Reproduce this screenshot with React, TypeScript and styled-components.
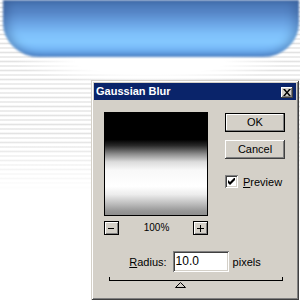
import React from "react";
import styled, { createGlobalStyle } from "styled-components";

const Global = createGlobalStyle`
  html, body { margin: 0; padding: 0; background: #fff; }
  body { font-family: "Liberation Sans", Arial, sans-serif; }
`;

const Page = styled.div`
  position: relative;
  width: 300px;
  height: 300px;
  overflow: hidden;
  display: flex;
  flex-direction: column;
  background-color: #fff;
  background-image:
    linear-gradient(to bottom, rgba(255,255,255,0) 0px, rgba(255,255,255,0) 135px, #fff 192px),
    radial-gradient(ellipse 135px 22px at 150px 62px, #fff 55%, rgba(255,255,255,0) 100%),
    repeating-linear-gradient(to bottom, #fff 0px, #fff 1.5px, #e3e3e3 3px, #fff 4.5px);
`;

const Banner = styled.div`
  margin-left: 3px;
  width: 296px;
  height: 57px;
  flex: none;
  border-radius: 0 0 36px 36px / 0 0 34px 34px;
  background: linear-gradient(
    to bottom,
    #4a78b8 0px,
    #5585c6 12px,
    #6ca6e6 24px,
    #7ec0fa 34px,
    #84c8ff 42px,
    #74b6f6 50px,
    #5b98e0 57px
  );
  box-shadow: inset 6px 0 8px rgba(40, 70, 120, 0.35), inset -6px 0 8px rgba(40, 70, 120, 0.3);
  filter: blur(0.8px);
`;

const Dialog = styled.div`
  margin-top: 23px;
  margin-left: 91px;
  width: 208px;
  height: 220px;
  flex: none;
  box-sizing: border-box;
  padding: 3px;
  background: #d4d0c8;
  box-shadow: inset 1px 1px #d4d0c8, inset -1px -1px #404040, inset 2px 2px #fff, inset -2px -2px #808080;
  display: flex;
  flex-direction: column;
  font-family: "Liberation Sans", Arial, sans-serif;
  font-size: 11px;
  color: #000;
`;

const TitleBar = styled.div`
  height: 17px;
  background: #0a246a;
  display: flex;
  align-items: center;
  justify-content: space-between;
  padding: 0 2px 0 2px;
`;

const Title = styled.span`
  color: #fff;
  font-weight: bold;
  font-size: 11px;
  line-height: 17px;
  white-space: nowrap;
`;

const CloseButton = styled.div`
  width: 12px;
  height: 11px;
  box-sizing: border-box;
  background: #d4d0c8;
  box-shadow: inset -1px -1px #404040, inset 1px 1px #fff, inset -2px -2px #808080;
  display: flex;
  align-items: center;
  justify-content: center;
  margin-top: 1px;
  margin-right: 1px;
`;

const Body = styled.div`
  display: flex;
  flex-direction: column;
  padding-top: 12px;
`;

const TopArea = styled.div`
  display: flex;
  gap: 17px;
  padding-left: 10px;
`;

const LeftCol = styled.div`
  width: 104px;
  display: flex;
  flex-direction: column;
`;

const PreviewBox = styled.div`
  width: 104px;
  height: 104px;
  box-sizing: border-box;
  border: 1px solid #000;
  background: linear-gradient(
    to bottom,
    #000 0%,
    #000 26%,
    #2a2a2a 32%,
    #8a8a8a 40%,
    #dcdcdc 48%,
    #f8f8f8 56%,
    #fff 72%,
    #ececec 80%,
    #bdbdbd 89%,
    #979797 96%,
    #8e8e8e 100%
  );
`;

const ZoomRow = styled.div`
  margin-top: 5px;
  height: 14px;
  display: flex;
  align-items: center;
  justify-content: space-between;
`;

const TinyButton = styled.div`
  width: 15px;
  height: 14px;
  box-sizing: border-box;
  border: 1px solid #000;
  background: #d4d0c8;
  box-shadow: inset 1px 1px #fff, inset -1px -1px #808080;
  display: flex;
  align-items: center;
  justify-content: center;
`;

const ZoomLabel = styled.span`
  font-size: 10px;
  line-height: 14px;
  padding-left: 1px;
`;

const RightCol = styled.div`
  width: 60px;
  padding-top: 1px;
  display: flex;
  flex-direction: column;
  gap: 8px;
`;

const PushButton = styled.div<{ $default?: boolean }>`
  width: 60px;
  height: 19px;
  box-sizing: border-box;
  background: #d4d0c8;
  border: ${(p) => (p.$default ? "1px solid #000" : "none")};
  box-shadow: ${(p) =>
    p.$default
      ? "inset -1px -1px #808080, inset 1px 1px #fff"
      : "inset -1px -1px #404040, inset 1px 1px #fff, inset -2px -2px #808080"};
  display: flex;
  align-items: center;
  justify-content: center;
  font-size: 11px;
  line-height: 17px;
`;

const CheckRow = styled.label`
  margin-top: 8px;
  display: flex;
  align-items: center;
  gap: 5px;
  font-size: 11px;
`;

const CheckBox = styled.div`
  width: 13px;
  height: 13px;
  box-sizing: border-box;
  background: #fff;
  box-shadow: inset 1px 1px #808080, inset -1px -1px #fff, inset 2px 2px #404040, inset -2px -2px #d4d0c8;
  display: flex;
  align-items: center;
  justify-content: center;
`;

const Underline = styled.span`
  text-decoration: underline;
`;

const RadiusRow = styled.div`
  margin-top: 16px;
  display: flex;
  align-items: center;
  justify-content: center;
  gap: 6px;
`;

const Label = styled.span`
  font-size: 11px;
  white-space: nowrap;
`;

const Input = styled.div`
  width: 56px;
  height: 21px;
  box-sizing: border-box;
  background: #fff;
  box-shadow: inset 1px 1px #808080, inset -1px -1px #fff, inset 2px 2px #404040, inset -2px -2px #d4d0c8;
  padding: 0 3px;
  font-size: 12px;
  line-height: 21px;
  margin-right: -2px;
`;

const Slider = styled.div`
  position: relative;
  align-self: center;
  margin-top: 5px;
  margin-left: 1px;
  width: 174px;
  height: 4px;
  box-sizing: border-box;
  border-left: 1px solid #000;
  border-right: 1px solid #000;
  border-bottom: 1px solid #000;
`;

const Thumb = styled.div`
  position: absolute;
  top: 5px;
  width: 11px;
  height: 6px;
  display: flex;
`;

export default function App() {
  const fraction = 0.375;
  return (
    <>
      <Global />
      <Page>
        <Banner />
        <Dialog>
          <TitleBar>
            <Title>Gaussian Blur</Title>
            <CloseButton>
              <svg width="8" height="7" viewBox="0 0 8 7">
                <path d="M0 0h2l2 2.5L6 0h2L5 3.5 8 7H6L4 4.5 2 7H0l3-3.5z" fill="#000" />
              </svg>
            </CloseButton>
          </TitleBar>
          <Body>
            <TopArea>
              <LeftCol>
                <PreviewBox />
                <ZoomRow>
                  <TinyButton>
                    <svg width="7" height="7" viewBox="0 0 7 7">
                      <rect x="0" y="3" width="6" height="1" fill="#000" />
                    </svg>
                  </TinyButton>
                  <ZoomLabel>100%</ZoomLabel>
                  <TinyButton>
                    <svg width="7" height="7" viewBox="0 0 7 7">
                      <rect x="0" y="3" width="7" height="1" fill="#000" />
                      <rect x="3" y="0" width="1" height="7" fill="#000" />
                    </svg>
                  </TinyButton>
                </ZoomRow>
              </LeftCol>
              <RightCol>
                <PushButton $default>OK</PushButton>
                <PushButton>Cancel</PushButton>
                <CheckRow>
                  <CheckBox>
                    <svg width="7" height="7" viewBox="0 0 7 7">
                      <path d="M0 2v3l2 2 5-5V-1L2 4z" fill="#000" />
                    </svg>
                  </CheckBox>
                  <span>
                    <Underline>P</Underline>review
                  </span>
                </CheckRow>
              </RightCol>
            </TopArea>
            <RadiusRow>
              <Label>
                <Underline>R</Underline>adius:
              </Label>
              <Input>10.0</Input>
              <Label>pixels</Label>
            </RadiusRow>
            <Slider>
              <Thumb style={{ left: `${fraction * 174}px` }}>
                <svg width="11" height="6" viewBox="0 0 11 6">
                  <path d="M5.5 0.5 L10.5 5.5 L0.5 5.5 Z" fill="#d4d0c8" stroke="#000" strokeWidth="1" />
                </svg>
              </Thumb>
            </Slider>
          </Body>
        </Dialog>
      </Page>
    </>
  );
}
